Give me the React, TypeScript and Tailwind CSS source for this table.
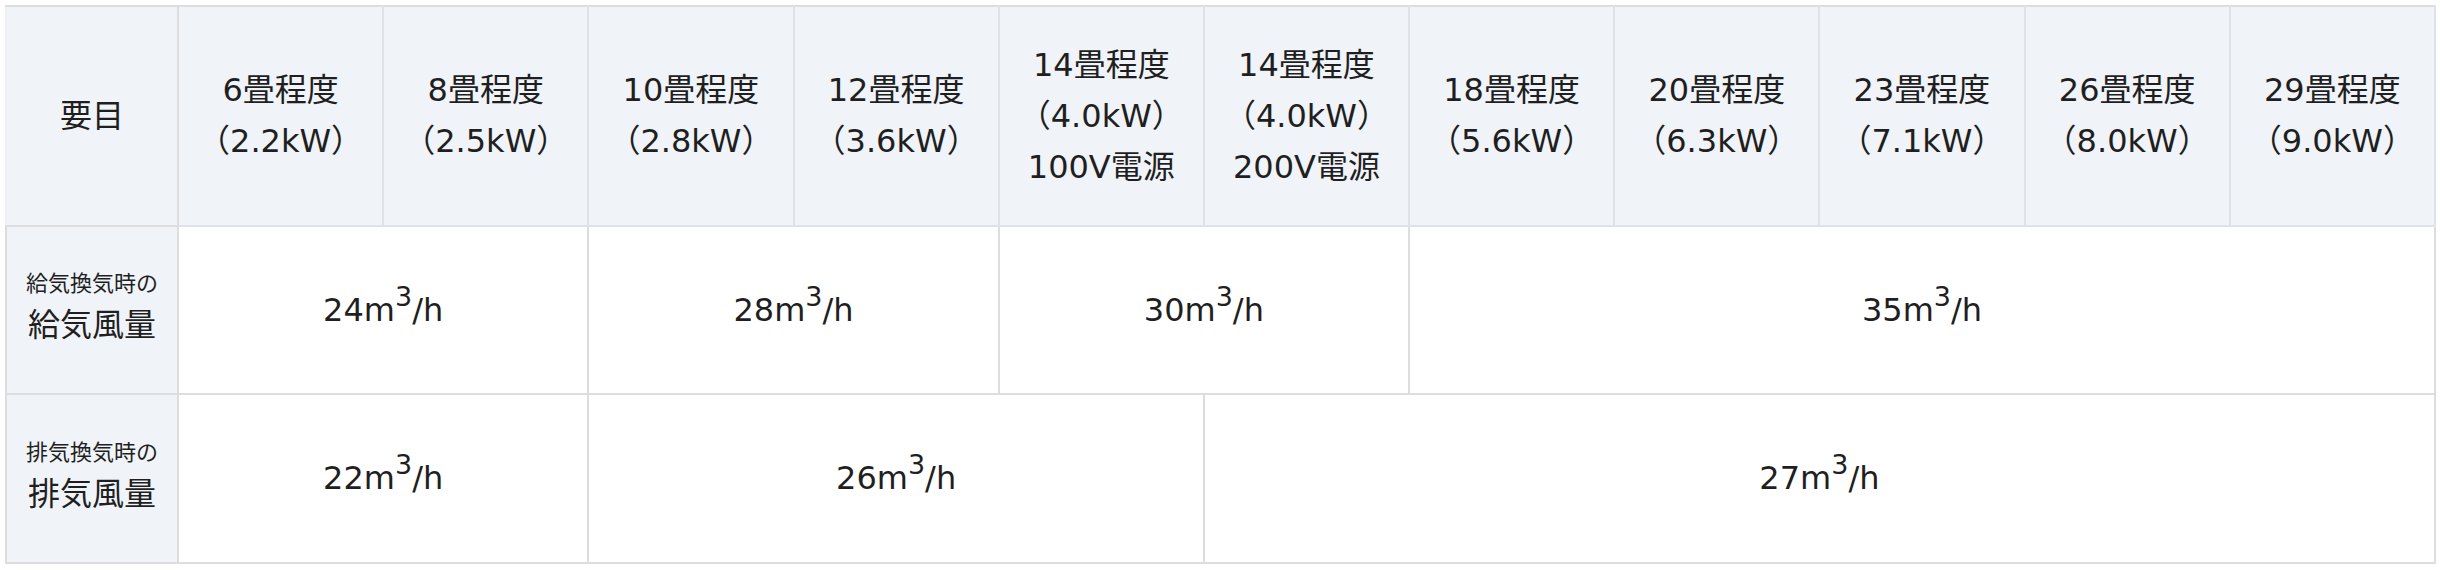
import React from 'react';

const heads: string[][] = [
  ['6畳程度', '（2.2kW）'],
  ['8畳程度', '（2.5kW）'],
  ['10畳程度', '（2.8kW）'],
  ['12畳程度', '（3.6kW）'],
  ['14畳程度', '（4.0kW）', '100V電源'],
  ['14畳程度', '（4.0kW）', '200V電源'],
  ['18畳程度', '（5.6kW）'],
  ['20畳程度', '（6.3kW）'],
  ['23畳程度', '（7.1kW）'],
  ['26畳程度', '（8.0kW）'],
  ['29畳程度', '（9.0kW）'],
];

const supplyRow = [
  { v: '24', span: 2 },
  { v: '28', span: 2 },
  { v: '30', span: 2 },
  { v: '35', span: 5 },
];

const exhaustRow = [
  { v: '22', span: 2 },
  { v: '26', span: 3 },
  { v: '27', span: 6 },
];

const Flow = ({ v }: { v: string }) => (
  <span>
    {v}m<sup className="text-[27px] relative -top-[3px] align-super leading-none">3</sup>/h
  </span>
);

const RowHead = ({ small, big }: { small: string; big: string }) => (
  <th className="border-2 border-[#dddddd] bg-[#f0f3f7] font-normal p-0">
    <div className="flex flex-col items-center justify-center">
      <span className="text-[22px] leading-[30px]">{small}</span>
      <span className="text-[32px] leading-[52px]">{big}</span>
    </div>
  </th>
);

export default function App() {
  return (
    <div
      className="bg-white w-[2440px] h-[570px] p-[5px] text-[#1f1f1f]"
      style={{ fontFamily: '"DejaVu Sans", "Noto Sans CJK JP", sans-serif' }}
    >
      <table className="table-fixed border-collapse w-[2431px] text-[32px] leading-[51px] text-center">
        <colgroup>
          <col className="w-[172px]" />
          {heads.map((_, i) => (
            <col key={i} />
          ))}
        </colgroup>
        <thead>
          <tr className="h-[220px]">
            <th className="border-2 border-[#dddddd] border-l-[#eef1f5] bg-[#f0f3f7] font-normal">要目</th>
            {heads.map((lines, i) => (
              <th key={i} className="border-2 border-[#dfe3e9] border-t-[#dddddd] bg-[#f0f3f7] font-normal p-0">
                {lines.map((l, j) => (
                  <div key={j}>{l}</div>
                ))}
              </th>
            ))}
          </tr>
        </thead>
        <tbody>
          <tr className="h-[168px]">
            <RowHead small="給気換気時の" big="給気風量" />
            {supplyRow.map((c, i) => (
              <td key={i} colSpan={c.span} className="border-2 border-[#dddddd]">
                <Flow v={c.v} />
              </td>
            ))}
          </tr>
          <tr className="h-[169px]">
            <RowHead small="排気換気時の" big="排気風量" />
            {exhaustRow.map((c, i) => (
              <td key={i} colSpan={c.span} className="border-2 border-[#dddddd]">
                <Flow v={c.v} />
              </td>
            ))}
          </tr>
        </tbody>
      </table>
    </div>
  );
}
